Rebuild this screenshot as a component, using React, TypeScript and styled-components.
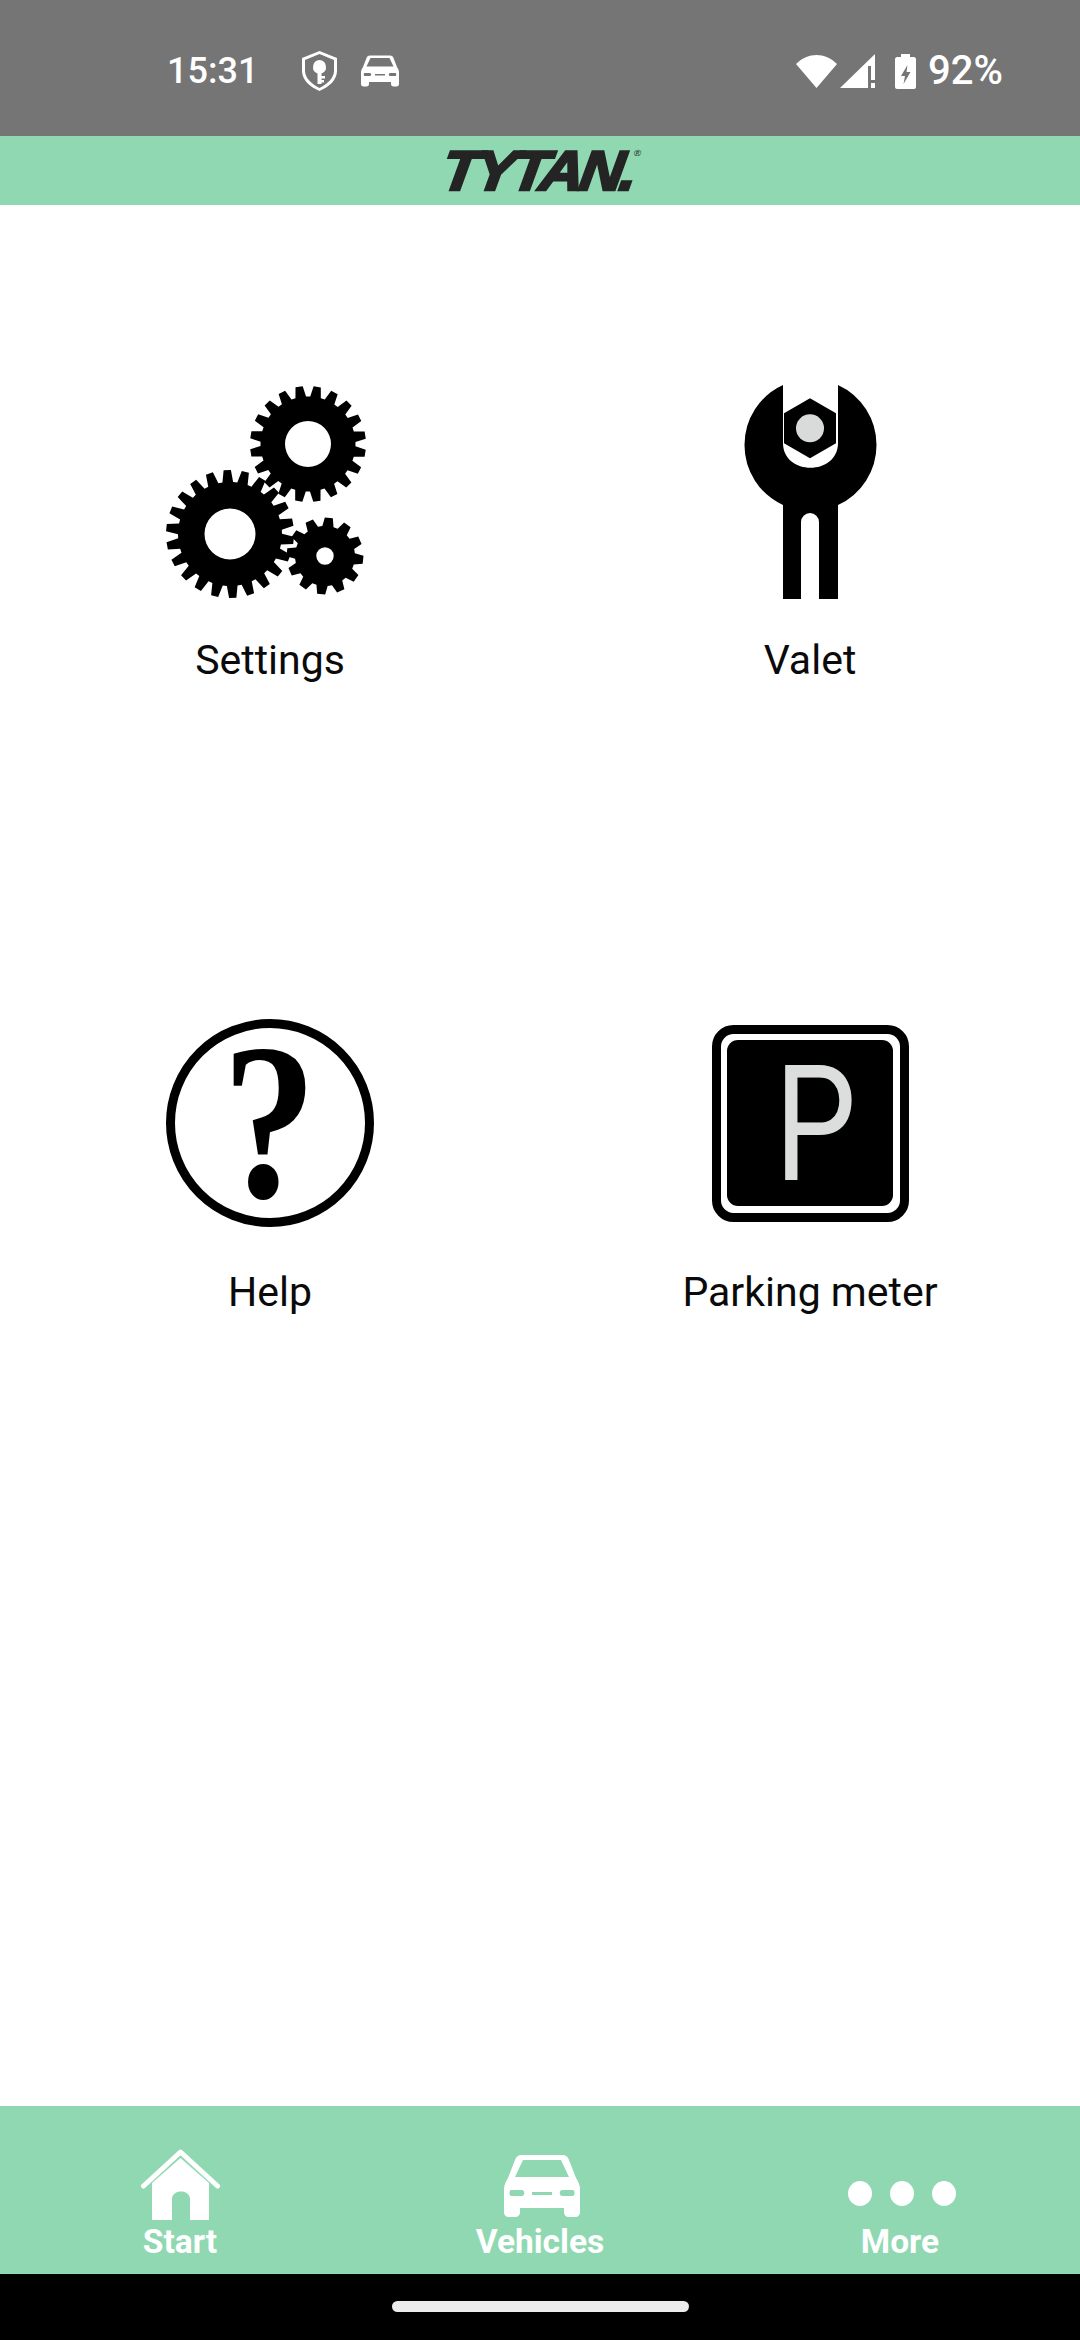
import styled, { createGlobalStyle } from "styled-components";

const MINT = "#90d8b2";

const GlobalStyle = createGlobalStyle`
  html, body {
    margin: 0;
    padding: 0;
    background: #fff;
  }
  * {
    box-sizing: border-box;
  }
`;

const Screen = styled.div`
  width: 1080px;
  height: 2340px;
  display: flex;
  flex-direction: column;
  font-family: Roboto, "Liberation Sans", sans-serif;
`;

const StatusBar = styled.div`
  height: 136px;
  flex-shrink: 0;
  background: #757575;
  color: #fff;
  display: flex;
  align-items: center;
  justify-content: space-between;
  padding: 6px 77px 0 167px;
`;

const StatusGroup = styled.div`
  display: flex;
  align-items: center;
`;

const StatusText = styled.span<{ $size: number; $left?: number }>`
  font-size: ${({ $size }) => $size}px;
  font-weight: 500;
  line-height: 44px;
  margin-left: ${({ $left }) => $left ?? 0}px;
`;

const StatusIcon = styled.svg<{ $left: number }>`
  display: block;
  margin-left: ${({ $left }) => $left}px;
  fill: #fff;
`;

const StatusCar = styled.div`
  margin-left: 24px;
`;

const Header = styled.header`
  height: 69px;
  flex-shrink: 0;
  background: ${MINT};
  display: flex;
  align-items: center;
  justify-content: center;
`;

const Logo = styled.div`
  position: relative;
  width: 186px;
  height: 50px;
  display: flex;
  align-items: center;
  justify-content: center;
  color: #242424;
  font-family: "Liberation Sans", sans-serif;
  font-weight: 700;
  font-style: italic;
  font-size: 56px;
  line-height: 50px;
  letter-spacing: -3.5px;
  -webkit-text-stroke: 2.6px #242424;
  transform: translateX(-2px) scaleX(1.08) skewX(-8deg);
`;

const LogoMark = styled.span`
  position: absolute;
  top: 2px;
  right: 0;
  font-size: 9px;
  line-height: 10px;
  font-style: normal;
  font-weight: 400;
  letter-spacing: 0;
  -webkit-text-stroke: 0;
`;

const Menu = styled.main`
  flex: 1;
  background: #fff;
  display: grid;
  grid-template-columns: 1fr 1fr;
  grid-auto-rows: 632px;
  padding-top: 179px;
`;

const MenuItem = styled.div`
  display: flex;
  flex-direction: column;
  align-items: center;
`;

const MenuIcon = styled.svg`
  display: block;
  width: 216px;
  height: 216px;
  flex-shrink: 0;
`;

const HelpCircle = styled.div`
  width: 208px;
  height: 208px;
  margin: 3px 0 5px;
  flex-shrink: 0;
  border: 9px solid #000;
  border-radius: 50%;
  display: flex;
  align-items: center;
  justify-content: center;
`;

const HelpMark = styled.span`
  font-family: "Liberation Serif", serif;
  font-weight: 700;
  font-size: 222px;
  line-height: 190px;
  color: #000;
  transform: translate(-1px, -1px) scaleX(0.85);
`;

const MenuLabel = styled.span`
  margin-top: 36px;
  font-size: 41px;
  line-height: 48px;
  color: #0a0a0a;
`;

const BottomNav = styled.nav`
  height: 168px;
  flex-shrink: 0;
  background: ${MINT};
  display: grid;
  grid-template-columns: repeat(3, 1fr);
  padding-top: 42px;
`;

const NavItem = styled.div`
  display: flex;
  flex-direction: column;
  align-items: center;
  color: #fff;
`;

const NavIconBox = styled.div`
  height: 72px;
  display: flex;
  align-items: flex-end;
  justify-content: center;
`;

const NavIcon = styled.svg`
  display: block;
  fill: #fff;
`;

const NavCar = styled.div`
  margin: 0 0 3px 4px;
`;

const Dots = styled.div`
  display: flex;
  gap: 18px;
  margin-bottom: 14px;
  padding-left: 4px;
`;

const Dot = styled.span`
  width: 24px;
  height: 25px;
  border-radius: 50%;
  background: #fff;
`;

const NavLabel = styled.span`
  margin-top: 2px;
  font-size: 33.5px;
  line-height: 40px;
  font-weight: 700;
`;

const SystemBar = styled.div`
  height: 66px;
  flex-shrink: 0;
  background: #000;
  display: flex;
  justify-content: center;
  padding-top: 27px;
`;

const HomePill = styled.div`
  width: 297px;
  height: 11px;
  border-radius: 6px;
  background: #ececec;
`;

// builds a toothed wheel outline around (cx, cy)
const gearPath = (
  cx: number,
  cy: number,
  outer: number,
  root: number,
  teeth: number,
  hole: number,
  phase = 0
) => {
  const step = (Math.PI * 2) / teeth;
  const pts: string[] = [];
  const at = (r: number, a: number) =>
    `${(cx + r * Math.cos(a)).toFixed(2)} ${(cy + r * Math.sin(a)).toFixed(2)}`;
  for (let i = 0; i < teeth; i++) {
    const a = phase + i * step;
    pts.push(at(root, a - step * 0.36));
    pts.push(at(outer, a - step * 0.2));
    pts.push(at(outer, a + step * 0.2));
    pts.push(at(root, a + step * 0.36));
  }
  const ring = `M${pts.join("L")}Z`;
  const circle = `M${cx - hole} ${cy}a${hole} ${hole} 0 1 0 ${hole * 2} 0a${hole} ${hole} 0 1 0 ${-hole * 2} 0Z`;
  return ring + circle;
};

const GearsIcon = () => (
  <MenuIcon viewBox="0 0 216 216">
    <path fillRule="evenodd" d={gearPath(146, 60, 58, 47.5, 20, 23, 0.16)} />
    <path fillRule="evenodd" d={gearPath(68, 150, 64, 52, 22, 25.5, 0.1)} />
    <path fillRule="evenodd" d={gearPath(163, 172, 38.5, 30, 12, 8.7, 0.1)} />
  </MenuIcon>
);

const WrenchIcon = () => (
  <MenuIcon viewBox="0 0 216 216">
    <path d="M81 1A66 66 0 0 0 81 121V215H99V138A9 9 0 0 1 117 138V215H136V121A66 66 0 0 0 136 1V59C136 92 81 92 81 59Z" />
    <path d="M108 14.3L134 29.3V59.3L108 74.3L82 59.3V29.3Z" />
    <circle cx="108" cy="44.3" r="14" fill="#d9dbda" />
  </MenuIcon>
);

const ParkingIcon = () => (
  <MenuIcon viewBox="0 0 216 216">
    <rect x="14.5" y="13.5" width="188" height="188" rx="17" fill="none" stroke="#000" strokeWidth="9" />
    <rect x="25" y="24" width="166" height="166" rx="11" fill="#000" />
    <text
      transform="translate(72.5 164) scale(0.8 1)"
      fontFamily="Roboto, sans-serif"
      fontWeight="400"
      fontSize="162"
      fill="#dcdedd"
    >
      P
    </text>
  </MenuIcon>
);

const HomeIcon = () => (
  <NavIcon width="79" height="71" viewBox="0 0 79 71">
    <path d="M2.5 37L39.5 3L76.5 37" fill="none" stroke="#fff" strokeWidth="5" strokeLinecap="round" strokeLinejoin="round" />
    <path d="M39.5 9L68 34V71H49V50C49 40 31 40 31 50V71H11V34Z" />
  </NavIcon>
);

const CarIcon = ({ width, height }: { width: number; height: number }) => (
  <svg width={width} height={height} viewBox="0 0 76 62" fill="#fff" style={{ display: "block" }}>
    <path
      fillRule="evenodd"
      d="M18 0H58C62 0 64 2 65 5L72 23C74 26 76 30 76 34V57C76 60 74 62 71 62H65C62 62 60 60 60 57V53H16V57C16 60 14 62 11 62H5C2 62 0 60 0 57V34C0 30 2 26 4 23L11 5C12 2 14 0 18 0ZM19 5L11 22H65L57 5ZM7 35C5 35 5 41 7 41H18C21 41 21 35 18 35ZM28 37V40H48V37ZM58 35C55 35 55 41 58 41H69C71 41 71 35 69 35Z"
    />
  </svg>
);

const ShieldIcon = () => (
  <StatusIcon $left={44} width="35" height="40" viewBox="0 0 35 40">
    <path
      fillRule="evenodd"
      d="M17.5 0L35 7V20C35 29 27 36 17.5 40C8 36 0 29 0 20V7ZM17.5 3L3 9V20C3 27 10 33 17.5 37C25 33 32 27 32 20V9ZM17.5 9A7 7 0 0 1 19.5 22.5V25H23V27.5H19.5V29H22V31.5H19.5V33H15.5V22.5A7 7 0 0 1 17.5 9Z"
    />
  </StatusIcon>
);

const WifiIcon = () => (
  <StatusIcon $left={0} width="41" height="33" viewBox="0 0 41 33">
    <path d="M20.5 33L0 9C12 -3 29 -3 41 9Z" />
  </StatusIcon>
);

const SignalIcon = () => (
  <StatusIcon $left={3} width="35" height="34" viewBox="0 0 35 34">
    <path d="M0 34L35 0V12H28V34Z" />
    <rect x="31" y="12" width="4" height="14" />
    <rect x="31" y="29" width="4" height="5" />
  </StatusIcon>
);

const BatteryIcon = () => (
  <StatusIcon $left={20} width="21" height="35" viewBox="0 0 21 35">
    <path
      fillRule="evenodd"
      d="M6 0H15V3H19C20 3 21 4 21 5V33C21 34 20 35 19 35H2C1 35 0 34 0 33V5C0 4 1 3 2 3H6ZM12.5 11L6 22H10L8.5 30L15.5 18H11.5Z"
    />
  </StatusIcon>
);

const App = () => (
  <>
    <GlobalStyle />
    <Screen>
      <StatusBar>
        <StatusGroup>
          <StatusText $size={36}>15:31</StatusText>
          <ShieldIcon />
          <StatusCar>
            <CarIcon width={38} height={32} />
          </StatusCar>
        </StatusGroup>
        <StatusGroup>
          <WifiIcon />
          <SignalIcon />
          <BatteryIcon />
          <StatusText $size={40} $left={12}>92%</StatusText>
        </StatusGroup>
      </StatusBar>
      <Header>
        <Logo>
          TYTAN.
          <LogoMark>®</LogoMark>
        </Logo>
      </Header>
      <Menu>
        <MenuItem>
          <GearsIcon />
          <MenuLabel>Settings</MenuLabel>
        </MenuItem>
        <MenuItem>
          <WrenchIcon />
          <MenuLabel>Valet</MenuLabel>
        </MenuItem>
        <MenuItem>
          <HelpCircle>
            <HelpMark>?</HelpMark>
          </HelpCircle>
          <MenuLabel>Help</MenuLabel>
        </MenuItem>
        <MenuItem>
          <ParkingIcon />
          <MenuLabel>Parking meter</MenuLabel>
        </MenuItem>
      </Menu>
      <BottomNav>
        <NavItem>
          <NavIconBox>
            <HomeIcon />
          </NavIconBox>
          <NavLabel>Start</NavLabel>
        </NavItem>
        <NavItem>
          <NavIconBox>
            <NavCar>
              <CarIcon width={76} height={62} />
            </NavCar>
          </NavIconBox>
          <NavLabel>Vehicles</NavLabel>
        </NavItem>
        <NavItem>
          <NavIconBox>
            <Dots>
              <Dot />
              <Dot />
              <Dot />
            </Dots>
          </NavIconBox>
          <NavLabel>More</NavLabel>
        </NavItem>
      </BottomNav>
      <SystemBar>
        <HomePill />
      </SystemBar>
    </Screen>
  </>
);

export default App;
